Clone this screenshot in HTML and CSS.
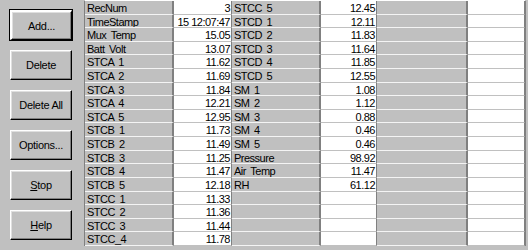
FILE: index.html
```html
<!DOCTYPE html>
<html lang="en">
<head>
  <meta charset="UTF-8" />
  <title>Data Display</title>
  <link rel="stylesheet" href="styles.css">
</head>
<body>
  <div class="window">
    <div class="button-panel">
      <button class="button button-default">Add...</button>
      <button class="button">Delete</button>
      <button class="button">Delete All</button>
      <button class="button">Options...</button>
      <button class="button"><u>S</u>top</button>
      <button class="button"><u>H</u>elp</button>
    </div>

    <div class="data-grid" id="data-grid"></div>
  </div>

  <script>
    const columns = [
      [
        ["RecNum", "3"], ["TimeStamp", "15 12:07:47"], ["Mux Temp", "15.05"], ["Batt Volt", "13.07"],
        ["STCA 1", "11.62"], ["STCA 2", "11.69"], ["STCA 3", "11.84"], ["STCA 4", "12.21"], ["STCA 5", "12.95"],
        ["STCB 1", "11.73"], ["STCB 2", "11.49"], ["STCB 3", "11.25"], ["STCB 4", "11.47"], ["STCB 5", "12.18"],
        ["STCC 1", "11.33"], ["STCC 2", "11.36"], ["STCC 3", "11.44"], ["STCC_4", "11.78"]
      ],
      [
        ["STCC 5", "12.45"], ["STCD 1", "12.11"], ["STCD 2", "11.83"], ["STCD 3", "11.64"], ["STCD 4", "11.85"],
        ["STCD 5", "12.55"], ["SM 1", "1.08"], ["SM 2", "1.12"], ["SM 3", "0.88"], ["SM 4", "0.46"],
        ["SM 5", "0.46"], ["Pressure", "98.92"], ["Air Temp", "11.47"], ["RH", "61.12"]
      ],
      []
    ];

    const grid = document.getElementById('data-grid');
    for (let row = 0; row < 18; row++) {
      columns.forEach(col => {
        const entry = col[row] || ["", ""];
        const label = document.createElement('div');
        label.className = 'cell cell-label';
        label.textContent = entry[0];
        const value = document.createElement('div');
        value.className = 'cell cell-value';
        value.textContent = entry[1];
        grid.appendChild(label);
        grid.appendChild(value);
      });
    }
  </script>
</body>
</html>
```

FILE: styles.css
```css
body {
    margin: 0;
    background-color: #c0c0c0;
    font-family: 'Liberation Sans', Arial, sans-serif;
    font-size: 11px;
    color: #000;
}

.window {
    display: flex;
    width: 528px;
    height: 250px;
    overflow: hidden;
}

.button-panel {
    display: flex;
    flex-direction: column;
    gap: 10px;
    padding: 10px;
    width: 62px;
    flex-shrink: 0;
    border-right: 2px solid #c0c0c0;
}

.button {
    height: 30px;
    width: 62px;
    padding: 0;
    background-color: #c0c0c0;
    font-family: 'Liberation Sans', Arial, sans-serif;
    font-size: 11px;
    letter-spacing: -0.3px;
    color: #000;
    border: 1px solid;
    border-color: #ffffff #000000 #000000 #ffffff;
    box-shadow: inset -1px -1px 0 #808080, inset 1px 1px 0 #dfdfdf;
    box-sizing: border-box;
}

.button-default {
    outline: 1px solid #000;
    outline-offset: 0;
    border-width: 2px 1px 1px 2px;
}

.data-grid {
    display: grid;
    grid-template-columns: 89px 58px 89px 56px 91px 57px;
    grid-template-rows: repeat(18, 1fr);
    height: 245px;
    border-left: 1px solid #808080;
    border-top: 1px solid #ffffff;
    border-right: 1px solid #808080;
    align-self: flex-start;
}

.cell {
    box-sizing: border-box;
    padding: 1px 1px 0;
    line-height: 12px;
    white-space: nowrap;
    overflow: hidden;
    letter-spacing: -0.5px;
    word-spacing: 2px;
}

.cell-label {
    background-color: #c0c0c0;
    border-bottom: 1px solid #f4f4f4;
    border-right: 2px solid #808080;
    padding-left: 2px;
}

.cell-value {
    background-color: #ffffff;
    border-bottom: 1px solid #c0c0c0;
    border-right: 1px solid #808080;
    text-align: right;
    word-spacing: 0;
}
```
